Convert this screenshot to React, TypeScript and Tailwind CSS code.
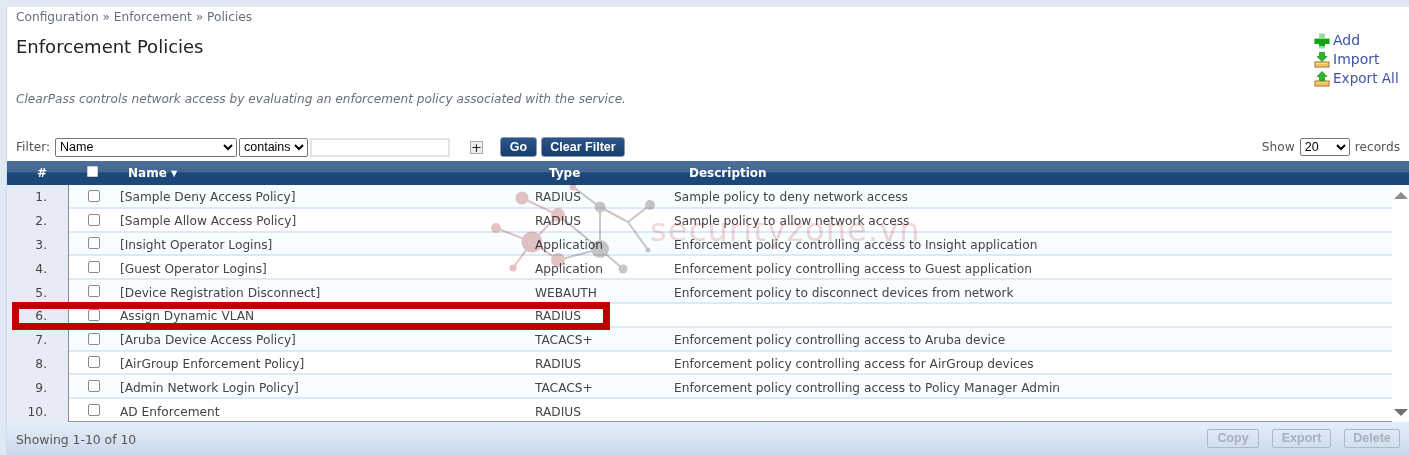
const rows = [
  ['[Sample Deny Access Policy]', 'RADIUS', 'Sample policy to deny network access'],
  ['[Sample Allow Access Policy]', 'RADIUS', 'Sample policy to allow network access'],
  ['[Insight Operator Logins]', 'Application', 'Enforcement policy controlling access to Insight application'],
  ['[Guest Operator Logins]', 'Application', 'Enforcement policy controlling access to Guest application'],
  ['[Device Registration Disconnect]', 'WEBAUTH', 'Enforcement policy to disconnect devices from network'],
  ['Assign Dynamic VLAN', 'RADIUS', ''],
  ['[Aruba Device Access Policy]', 'TACACS+', 'Enforcement policy controlling access to Aruba device'],
  ['[AirGroup Enforcement Policy]', 'RADIUS', 'Enforcement policy controlling access for AirGroup devices'],
  ['[Admin Network Login Policy]', 'TACACS+', 'Enforcement policy controlling access to Policy Manager Admin'],
  ['AD Enforcement', 'RADIUS', ''],
];

const font = { fontFamily: '"DejaVu Sans", Verdana, sans-serif' };
const arial = { fontFamily: '"Liberation Sans", Arial, sans-serif' };

function TrayIcon({ up }: { up?: boolean }) {
  return (
    <svg width="16" height="16" viewBox="0 0 16 16" className="shrink-0">
      <rect x="1" y="10" width="14" height="5" fill="#f8dc88" stroke="#a66c1a" />
      <rect x="2" y="12.5" width="12" height="1" fill="#e2a632" />
      <path
        d={up ? 'M8 0.5 L13 5.5 H10.5 V9.5 H5.5 V5.5 H3 Z' : 'M5.5 0.5 H10.5 V4.5 H13 L8 9.5 L3 4.5 H5.5 Z'}
        fill="#2cb52c"
        stroke="#1c861c"
        strokeWidth="0.7"
      />
    </svg>
  );
}

function PlusIcon() {
  return (
    <svg width="16" height="16" viewBox="0 0 16 16" className="shrink-0">
      <path d="M5 0.5 H11 V5 H15.5 V11 H11 V15.5 H5 V11 H0.5 V5 H5 Z" fill="#9fd99f" />
      <path d="M0.5 6 H15.5 V11 H11 V13 H5 V11 H0.5 Z" fill="#14a514" />
    </svg>
  );
}

function Watermark() {
  const pink = '#e6c3c3';
  const gray = '#c9c6c6';
  const pinkNodes = [[522, 198, 6.5], [558, 215, 7], [496, 228, 5], [532, 242, 10.5], [513, 268, 3.5], [558, 260, 7], [573, 187, 3.5]];
  const grayNodes = [[600, 207, 5.5], [650, 205, 5], [648, 250, 2.5], [600, 249, 9], [623, 269, 4.5]];
  const pinkEdges = [[522, 198, 558, 215], [558, 215, 532, 242], [496, 228, 532, 242], [532, 242, 513, 268], [532, 242, 558, 260]];
  const grayEdges = [[573, 187, 600, 207], [600, 207, 628, 222], [628, 222, 650, 205], [628, 222, 648, 250], [600, 207, 600, 249], [558, 215, 600, 249], [558, 260, 600, 249], [600, 249, 623, 269]];
  return (
    <div className="absolute left-[490px] top-[180px] w-[435px] h-[95px] pointer-events-none mix-blend-multiply z-10">
      <svg width="170" height="95" viewBox="490 180 170 95" className="absolute left-0 top-0">
        {grayEdges.map((e, i) => <line key={i} x1={e[0]} y1={e[1]} x2={e[2]} y2={e[3]} stroke={gray} strokeWidth="2" />)}
        {pinkEdges.map((e, i) => <line key={i} x1={e[0]} y1={e[1]} x2={e[2]} y2={e[3]} stroke={pink} strokeWidth="2" />)}
        {grayNodes.map((n, i) => <circle key={i} cx={n[0]} cy={n[1]} r={n[2]} fill={gray} />)}
        {pinkNodes.map((n, i) => <circle key={i} cx={n[0]} cy={n[1]} r={n[2]} fill={pink} />)}
      </svg>
      <div className="absolute left-[160px] top-[28px] text-[32px] leading-[44px] tracking-[1.15px] text-[#f3d8d8] whitespace-nowrap">securityzone.vn</div>
    </div>
  );
}

export default function App() {
  return (
    <div className="relative w-[1409px] h-[455px] overflow-hidden bg-[#e0e8f4] pt-[7px] pl-[6px] text-[12.2px] text-[#444]" style={font}>
      <div className="bg-white h-[448px] flex flex-col border-l border-[#cfdcf0]">
        <div className="h-[154px] relative flex flex-col pl-[9px] shrink-0">
          <div className="h-[20px] leading-[20px] text-[#666f7c]">Configuration » Enforcement » Policies</div>
          <div className="mt-[8px] text-[18px] leading-[24px] text-[#222]">Enforcement Policies</div>
          <div className="mt-[32px] text-[12.15px] italic leading-[16px] text-[#666f7c]">ClearPass controls network access by evaluating an enforcement policy associated with the service.</div>
          <div className="mt-[28px] flex items-center h-[24px]">
            <span className="w-[39px] text-[#555]">Filter:</span>
            <select className="w-[182px] h-[19px] border border-[#777] rounded-[2px] bg-white text-[12.5px] text-black" style={arial}>
              <option>Name</option>
            </select>
            <select className="ml-[2px] w-[69px] h-[19px] border border-[#777] rounded-[2px] bg-white text-[12.5px] text-black" style={arial}>
              <option>contains</option>
            </select>
            <input className="ml-[2px] w-[140px] h-[19px] border-2 border-[#e4e4e4] bg-white" />
            <span className="ml-[20px] w-[13px] h-[13px] border border-[#aaa] bg-[#eee] flex items-center justify-center text-[13px] leading-none text-[#222]">+</span>
            <button className="ml-[17px] w-[37px] h-[20px] rounded-[3px] border border-[#8a9bb0] bg-gradient-to-b from-[#2c5688] to-[#153c70] text-white font-bold text-[12.5px]" style={arial}>Go</button>
            <button className="ml-[4px] w-[84px] h-[20px] rounded-[3px] border border-[#8a9bb0] bg-gradient-to-b from-[#2c5688] to-[#153c70] text-white font-bold text-[12.5px] whitespace-nowrap" style={arial}>Clear Filter</button>
            <div className="ml-auto mr-[9px] flex items-center text-[#555]">
              <span>Show</span>
              <select className="mx-[5px] w-[50px] h-[18px] border border-[#777] rounded-[2px] bg-white text-[12.5px] text-black" style={arial}>
                <option>20</option>
              </select>
              <span>records</span>
            </div>
          </div>
          <div className="absolute top-[24px] right-[10px] w-[85px] flex flex-col text-[14px] leading-[19px] text-[#3f54a8]">
            <div className="flex items-center gap-[3px]"><PlusIcon /><span>Add</span></div>
            <div className="flex items-center gap-[3px]"><TrayIcon /><span>Import</span></div>
            <div className="flex items-center gap-[3px] whitespace-nowrap"><TrayIcon up /><span className="text-[13.6px]">Export All</span></div>
          </div>
        </div>

        <div className="h-[24px] shrink-0 flex items-center text-white font-bold text-[12px] bg-[linear-gradient(#4c6f9b_0%,#456892_45%,#1d4679_50%,#1d4679_100%)]">
          <div className="w-[70px] text-center">#</div>
          <div className="w-[51px] flex pl-[10px]"><span className="w-[11px] h-[11px] bg-white border border-[#ccc] rounded-[1px] mb-[4px]" /></div>
          <div className="w-[421px]">Name <span className="text-[8px] align-[1px]">▼</span></div>
          <div className="w-[140px]">Type</div>
          <div>Description</div>
        </div>

        <div className="h-[237px] shrink-0 flex">
          <div className="flex-1 flex flex-col border-b border-[#999]">
            {rows.map((r, i) => (
              <div key={i} className={`flex-1 min-h-0 flex items-center leading-[16px] border-b-2 border-[#dde9f9] last:border-b-0 ${i % 2 === 0 ? 'bg-[#f8fdff]' : 'bg-white'}`}>
                <div className="w-[62px] self-stretch -mb-[2px] flex items-center justify-end pr-[21px] pt-[1px] bg-[#e6ebf5] border-r border-[#8c8c8c] text-[#444]">{i + 1}.</div>
                <div className="w-[51px] flex justify-center pr-[2px]"><span className="w-[12px] h-[12px] bg-white border border-[#8a8a8a] rounded-[2px]" /></div>
                <div className="w-[415px] whitespace-nowrap pt-[3px]">{r[0]}</div>
                <div className="w-[139px] whitespace-nowrap pt-[3px]">{r[1]}</div>
                <div className="whitespace-nowrap pt-[3px]">{r[2]}</div>
              </div>
            ))}
          </div>
          <div className="w-[17px] shrink-0 bg-white flex flex-col items-center justify-between py-[7px]">
            <span className="w-0 h-0 border-x-[7px] border-x-transparent border-b-[7px] border-b-[#8d8d8d]" />
            <span className="w-0 h-0 border-x-[7px] border-x-transparent border-t-[7px] border-t-[#6f6f6f] mb-[-1px]" />
          </div>
        </div>

        <div className="flex-1 flex items-center px-[9px] bg-gradient-to-b from-[#e6eef8] to-[#c9d9ea] text-[#555]">
          <span className="text-[12.4px] pt-[3px]">Showing 1-10 of 10</span>
          <div className="ml-auto flex gap-[13px] font-bold text-[12.5px] text-[#a7b0bc]" style={arial}>
            <span className="w-[52px] h-[19px] border border-[#aeb9c6] rounded-[2px] flex items-center justify-center">Copy</span>
            <span className="w-[59px] h-[19px] border border-[#aeb9c6] rounded-[2px] flex items-center justify-center">Export</span>
            <span className="w-[56px] h-[19px] border border-[#aeb9c6] rounded-[2px] flex items-center justify-center">Delete</span>
          </div>
        </div>
      </div>

      <Watermark />
      <div className="absolute left-[12px] top-[302px] w-[598px] h-[28px] border-[7px] border-[#c00000] pointer-events-none z-20" />
    </div>
  );
}
